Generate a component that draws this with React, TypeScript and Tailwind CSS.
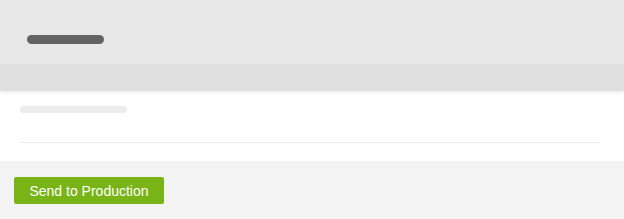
export default function App() {
  return (
    <div className="w-[624px] h-[219px] flex flex-col bg-[#f3f3f3] font-['Liberation_Sans',Arial,sans-serif]">
      {/* Header */}
      <div className="h-[64px] bg-[#e8e8e8] flex items-center pl-[27px] pt-[15px]">
        <div className="w-[77px] h-[9px] rounded-full bg-[#636363]" />
      </div>
      {/* Toolbar band */}
      <div className="h-[27px] bg-[#e0e0e0] shadow-[0_2px_3px_rgba(0,0,0,0.08)] relative z-10" />
      {/* Content */}
      <div className="h-[70px] bg-white pl-[20px] pr-[24px] flex flex-col">
        <div className="mt-[15px] w-[107px] h-[7px] rounded-full bg-[#ececec]" />
        <div className="mt-[29px] h-px bg-[#ececec]" />
      </div>
      {/* Footer */}
      <div className="flex-1 pl-[14px] pt-[16px]">
        <button className="w-[150px] h-[27px] rounded-[2px] bg-[#78b416] text-white text-[14px] leading-none flex items-center justify-center">
          Send to Production
        </button>
      </div>
    </div>
  );
}
